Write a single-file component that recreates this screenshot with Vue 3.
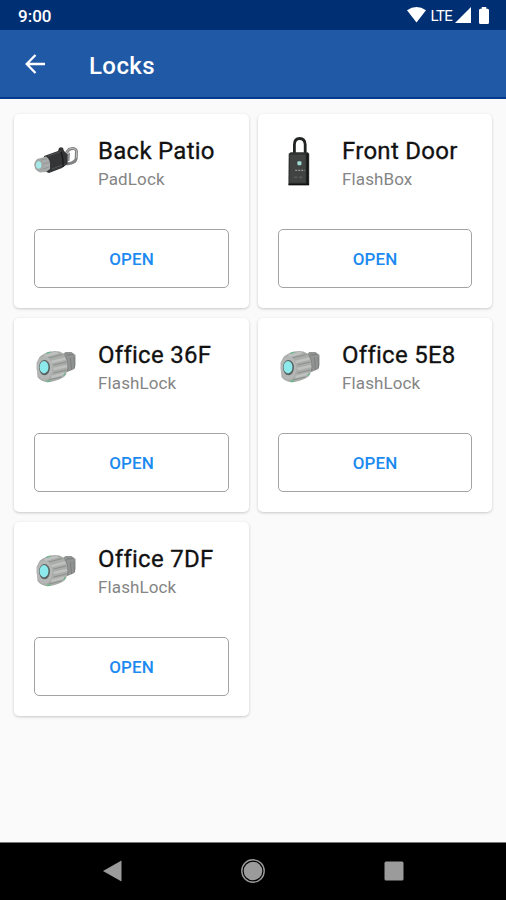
<script setup>
const locks = [
  { name: 'Back Patio', type: 'PadLock' },
  { name: 'Front Door', type: 'FlashBox' },
  { name: 'Office 36F', type: 'FlashLock' },
  { name: 'Office 5E8', type: 'FlashLock' },
  { name: 'Office 7DF', type: 'FlashLock' },
]
</script>

<template>
  <div class="screen">
    <div class="status">
      <span class="time">9:00</span>
      <svg class="wifi" width="19" height="16" viewBox="0 0 19 16"><path d="M0 3.200Q9.500-3 19 3.200L9.500 15.500Z" fill="#fff" /></svg>
      <span class="lte">LTE</span>
      <svg class="signal" width="16" height="16" viewBox="0 0 16 16"><path d="M16 0V16H0Z" fill="#fff" /></svg>
      <svg class="battery" width="10" height="17" viewBox="0 0 11 17" preserveAspectRatio="none"><path d="M3 0H8V1.700H9.500Q11 1.700 11 3.200V15.500Q11 17 9.500 17H1.500Q0 17 0 15.500V3.200Q0 1.700 1.500 1.700H3Z" fill="#fff" /></svg>
    </div>
    <header class="bar">
      <svg width="20" height="20" viewBox="0 0 20 20" fill="none" stroke="#fff" stroke-width="2.300"><path d="M10.500 1L1.700 10L10.500 19M1.700 10H20" /></svg>
      <h1>Locks</h1>
    </header>
    <main class="grid">
      <section v-for="lock in locks" :key="lock.name" class="card">
        <div class="info">
          <svg v-if="lock.type === 'PadLock'" class="device" viewBox="0 0 56 56">
            <path d="M38.500 18.500L41 15.500Q47.500 13 48.500 17L48.200 24.500Q47.500 28 43.500 29L38.500 30" fill="none" stroke="#808283" stroke-width="3" />
            <path d="M38.500 18.200L41.300 15Q46.500 13.200 48.700 17L48.400 24" fill="none" stroke="#c3c4c4" stroke-width=".9" />
            <path d="M39 20L42 18.500L41.500 26.500L39 28Z" fill="#8d8f90" />
            <path d="M16 22L30 17L31 14Q33 12.500 35 14L36 17L39.500 20V30L34 34L21 39L16 37Z" fill="#343536" />
            <path d="M20 22L33 17.500M24 35L37 30" stroke="#505253" stroke-width="1" />
            <path d="M33 18Q35.500 24 35 33" fill="none" stroke="#18191a" stroke-width="1.300" />
            <path d="M9 25L18 22.500Q23 25 22 35L18 38L12 38.500Q6 36 6.500 29Z" fill="#a9abab" />
            <path d="M13 26L19 24.500M15 30L22 28M15 35L21 33" stroke="#949797" stroke-width="1" />
            <ellipse cx="11" cy="31.200" rx="4.500" ry="6.200" fill="#a2a6a5" />
            <ellipse cx="10.700" cy="31" rx="2.700" ry="3.800" fill="#a5e9e8" />
          </svg>
          <svg v-else-if="lock.type === 'FlashBox'" class="device" viewBox="0 0 56 56">
            <g transform="translate(-.3 .7)">
              <path d="M22.700 19V10Q22.700 3.800 28 3.800T33.500 10V19" fill="none" stroke="#222323" stroke-width="2.800" />
              <path d="M17 19L19 17.500H36L37.500 19V50.500H16.700Z" fill="#303232" />
              <path d="M18.500 20H34V48H18Z" fill="#414343" />
              <path d="M35.700 19V50" stroke="#161717" stroke-width="2" />
              <path d="M17 49.700H37.300" stroke="#111" stroke-width="1.500" />
              <rect x="25.700" y="26.500" width="4" height="4" rx="1" fill="#9fddd2" />
              <path d="M23.500 35.700H33" stroke="#959999" stroke-width="1.300" stroke-dasharray="2 1" />
              <path d="M22.500 42.500H32" stroke="#686b6b" stroke-width="1" stroke-dasharray="3 2" />
            </g>
          </svg>
          <svg v-else class="device" viewBox="0 0 56 56">
            <g transform="translate(-.5 0)">
              <path d="M34 17L38 14L44 14L48 17V27L47 31L40 34L34 34Z" fill="#929493" />
              <path d="M39 17L46 16.500M43 20L44 32M46.500 19L47 30" stroke="#7b7e7d" stroke-width="1" />
              <path d="M37.500 18Q41 24 40 33" fill="none" stroke="#707372" stroke-width="1.200" />
              <path d="M9 25L12 19Q17 14.500 23 13.500Q31 12 35 15Q39 19 40 25Q41 34 37 38.500Q32 42 23 44Q14 45 10 39Z" fill="#a9aca9" />
              <path d="M17 18L30 14.500M24 24L38 20.500M26 31L39.500 28M24 39L37 35.500" stroke="#bec1bf" stroke-width="2.600" />
              <path d="M21 20L35 16.500M26 27L39 24M26 35L39 32M21 42L34 39" stroke="#8c908d" stroke-width="1" />
              <ellipse cx="17" cy="30" rx="8" ry="11.600" fill="#b4b7b5" />
              <ellipse cx="17" cy="29.600" rx="5.500" ry="7.600" fill="#59605f" />
              <ellipse cx="16.500" cy="29.200" rx="4.400" ry="6.200" fill="#8ceaec" />
              <path d="M19 15.300L23 14M19 43.500L23 43M36 37.500L38 35.500" stroke="#69b78d" stroke-width="1.300" />
            </g>
          </svg>
          <div class="text">
            <h2>{{ lock.name }}</h2>
            <p>{{ lock.type }}</p>
          </div>
        </div>
        <button type="button">OPEN</button>
      </section>
    </main>
    <nav class="nav">
      <svg width="19" height="22" viewBox="0 0 19 22"><path d="M0 11L18.500 .5V21.500Z" fill="#9b9b9b" /></svg>
      <svg width="24" height="24" viewBox="0 0 24 24"><circle cx="12" cy="12" r="11.200" fill="none" stroke="#9b9b9b" stroke-width="1.400" /><circle cx="12" cy="12" r="9.300" fill="#9b9b9b" /></svg>
      <svg width="20" height="20" viewBox="0 0 20 20"><rect x=".5" y=".5" width="19" height="19" rx="1.500" fill="#9b9b9b" /></svg>
    </nav>
  </div>
</template>

<style>
body { background: #fafafa; }
</style>

<style scoped>
.screen { width: 506px; height: 900px; display: flex; flex-direction: column; background: #fafafa; font-family: Roboto, sans-serif; overflow: hidden; }
.status { height: 30px; box-sizing: border-box; display: flex; align-items: center; padding: 0 17px 0 18px; background: #003073; color: #fff; }
.time { font-size: 17px; font-weight: 500; line-height: 30px; margin-top: 2px; }
.wifi { margin-left: auto; }
.lte { font-size: 15px; line-height: 30px; letter-spacing: -.7px; margin: 2px 3px 0 5px; }
.battery { margin-left: 8px; }
.bar { height: 69px; box-sizing: border-box; display: flex; align-items: center; padding-left: 25px; gap: 44px; background: #2059a6; border-bottom: 2px solid #063a8d; }
.bar h1 { margin: 4px 0 0; color: #fff; font-size: 24px; font-weight: 500; line-height: 30px; letter-spacing: .4px; }
.grid { flex: 1; display: grid; grid-template-columns: 235px 234px; grid-auto-rows: 194px; gap: 10px 9px; padding: 15px 14px; align-content: start; }
.card { box-sizing: border-box; display: flex; flex-direction: column; padding: 20px 20px 19px; border-radius: 5px; background: #fff; box-shadow: 0 1px 3px rgba(0, 0, 0, .2); }
.info { display: flex; height: 95px; }
.device { flex: none; width: 56px; height: 56px; margin: 0 14px 0 -6px; }
.text { padding-top: 2px; white-space: nowrap; }
h2 { margin: 0; color: #111; font-size: 24px; line-height: 30px; font-weight: 400; letter-spacing: .27px; -webkit-text-stroke: .3px #111; }
p { margin: 2px 0 0; color: #858585; font-size: 17px; line-height: 22px; letter-spacing: .12px; }
button { height: 59px; padding: 2px 0 0; border: 1px solid #a3a3a3; border-radius: 5px; background: #fff; color: #1c8af0; font: 500 17px/55px Roboto, sans-serif; letter-spacing: .1px; }
.nav { height: 58px; box-sizing: border-box; flex: none; display: flex; align-items: center; justify-content: space-between; padding: 0 102px 2px 103px; background: #000; border-top: 1px solid #777; }
</style>
